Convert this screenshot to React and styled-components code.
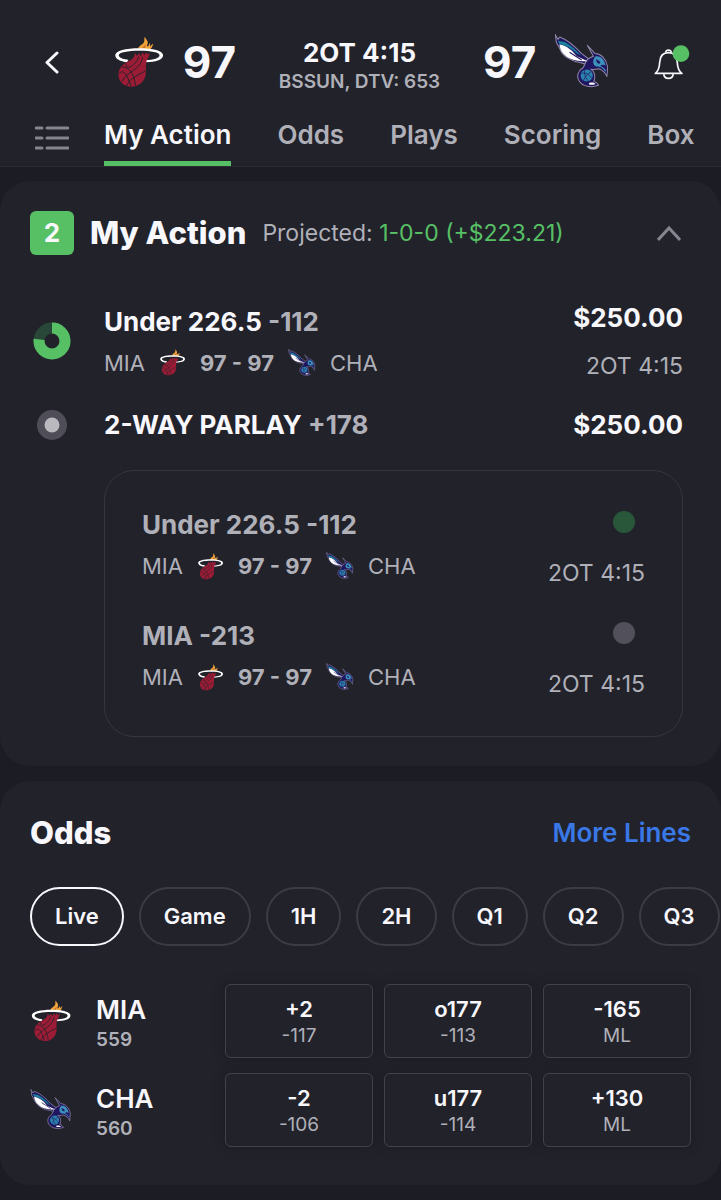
import React, { useState } from "react";
import styled, { createGlobalStyle } from "styled-components";

const HEADER_TABS = ["My Action", "Odds", "Plays", "Scoring", "Box"];
const PERIODS = ["Live", "Game", "1H", "2H", "Q1", "Q2", "Q3"];

const LEGS = [
  { id: 1, title: "Under 226.5 -112", winning: true },
  { id: 2, title: "MIA -213", winning: false },
];

const TEAMS = [
  {
    name: "MIA",
    number: 559,
    lines: [
      { value: "+2", price: "-117" },
      { value: "o177", price: "-113" },
      { value: "-165", price: "ML" },
    ],
  },
  {
    name: "CHA",
    number: 560,
    lines: [
      { value: "-2", price: "-106" },
      { value: "u177", price: "-114" },
      { value: "+130", price: "ML" },
    ],
  },
];

function HeatLogo({ size }) {
  return (
    <svg width={size} height={size} viewBox="28 16 158 162" aria-hidden="true">
      <path
        fill="#f2a33a"
        d="M104 56 C106 46 116 44 122 36 C126 31 122 24 125 18 C129 27 136 31 134 39 C133 43 131 46 132 49 C138 47 139 42 140 38 C143 42 142 46 141 49 C145 46 147 42 151 39 C150 47 146 53 142 58 Z"
      />
      <path
        fill="#c8741f"
        d="M116 56 C118 49 125 48 127 42 C129 47 127 51 126 56 Z"
      />
      <path
        fill="#fff"
        fillRule="evenodd"
        d="M108 54 C150 54 182 61 182 76 C182 91 158 97 128 98 L128 91 C152 90 171 86 171 76 C171 67 145 62 108 62 C72 62 44 67 44 76 C44 83 55 88 74 90 L70 98 C48 95 33 88 33 76 C33 62 66 54 108 54 Z"
      />
      <path
        fill="#9c1c36"
        d="M94 68 L101 78 L107 68 L112 79 L119 66 L123 76 L130 66 L132 74 L141 70 C139 82 131 88 129 99 C126 113 131 126 127 141 C122 160 106 174 83 174 C59 174 43 158 43 137 C43 117 57 103 74 95 C86 89 94 82 94 68 Z"
      />
      <g fill="none" stroke="#22222b" strokeWidth="3">
        <path d="M44 134 C58 119 68 131 82 172" />
        <path d="M54 112 C75 112 93 134 96 170" />
        <path d="M66 101 C70 127 90 107 101 92 C104 89 105 84 106 80" />
        <path d="M53 158 C62 143 76 132 88 124 C104 113 116 102 118 82" />
        <path d="M68 172 C76 150 105 136 127 125" />
      </g>
    </svg>
  );
}

function HornetsLogo({ size }) {
  return (
    <svg width={size} height={size} viewBox="26 24 166 166" aria-hidden="true">
      <g stroke="#9088a3" strokeWidth="3" strokeLinejoin="round">
        <path
          fill="#201560"
          d="M30 26 L38 40 L43 33 C72 44 91 64 108 82 L137 104 C132 113 119 115 106 109 C82 106 51 92 43 67 L33 49 Z"
        />
        <path
          fill="#201560"
          d="M125 58 L148 82 C166 83 181 98 185 121 L183 150 C178 139 171 131 159 127 C149 127 142 132 135 128 C147 134 150 151 144 164 C149 165 155 170 158 176 C135 184 112 180 101 164 C91 150 98 132 112 124 L117 115 C119 102 131 94 143 90 Z"
        />
      </g>
      <path fill="#1b819d" d="M37 44 L58 48 C78 58 93 75 106 88 L94 82 C76 66 60 57 42 54 Z" />
      <path
        fill="#fff"
        d="M42 55 C65 58 82 75 94 90 L126 105 C104 105 86 103 70 95 C53 85 44 72 42 55 Z"
      />
      <path stroke="#201560" strokeWidth="3" d="M72 78 L108 101" />
      <path
        fill="#3c91ba"
        d="M148 91 C163 87 175 98 179 119 C169 109 162 124 151 120 C142 118 138 106 148 91 Z"
      />
      <path fill="#201560" d="M151 99 C158 101 164 106 163 111 C157 114 151 110 151 99 Z" />
      <circle cx="123" cy="147" r="18" fill="#2b83ad" />
      <g fill="none" stroke="#201560" strokeWidth="2">
        <path d="M108 141 C120 136 132 145 138 157 M117 131 C114 145 122 156 128 164 M136 136 C124 142 117 153 114 161" />
        <path d="M158 119 C169 121 175 128 179 134" stroke="#4ba3c8" strokeWidth="3" />
      </g>
      <path fill="#fff" d="M130 169 C138 167 144 168 149 172 C142 175 136 175 130 174 Z" />
    </svg>
  );
}

function TeamLogo({ team, size }) {
  return team === "MIA" ? <HeatLogo size={size} /> : <HornetsLogo size={size} />;
}

function BellIcon() {
  return (
    <svg width="37" height="38" viewBox="520 64 110 112" aria-hidden="true">
      <g fill="none" stroke="#f7f7fc" strokeWidth="5" strokeLinejoin="round">
        <path d="M527 154 C535 148 539 138 540 120 C541 101 551 92 566 92 C581 92 591 101 592 120 C593 138 597 148 606 154 Z" />
        <path d="M558 92 C557 82 575 82 574 92" />
        <path d="M552 156 C553 173 579 173 580 156" />
      </g>
      <circle cx="603" cy="95" r="25" fill="#57c065" />
    </svg>
  );
}

function Matchup() {
  return (
    <MatchupRow>
      <span>MIA</span>
      <HeatLogo size={27} />
      <strong>97 - 97</strong>
      <HornetsLogo size={28} />
      <span>CHA</span>
    </MatchupRow>
  );
}

function GameHeader() {
  const [tab, setTab] = useState("My Action");

  return (
    <Header>
      <Scoreboard>
        <IconButton aria-label="Back">
          <svg width="14" height="23" viewBox="0 0 14 23" aria-hidden="true">
            <path
              d="M12 2 L2 11.500 L12 21"
              fill="none"
              stroke="#f7f7fc"
              strokeWidth="3"
              strokeLinecap="round"
              strokeLinejoin="round"
            />
          </svg>
        </IconButton>
        <TeamScore>
          <HeatLogo size={52} />
          <span>97</span>
        </TeamScore>
        <Clock>
          <h1>2OT 4:15</h1>
          <p>BSSUN, DTV: 653</p>
        </Clock>
        <TeamScore>
          <span>97</span>
          <HornetsLogo size={56} />
        </TeamScore>
        <IconButton aria-label="Alerts">
          <BellIcon />
        </IconButton>
      </Scoreboard>
      <TabBar>
        <MenuButton aria-label="All games">
          <svg width="34" height="26" viewBox="0 0 34 26" aria-hidden="true">
            <path
              d="M1 3 H7 M12 3 H33 M1 13 H7 M12 13 H33 M1 23 H7 M12 23 H33"
              stroke="#85858f"
              strokeWidth="3"
              strokeLinecap="round"
            />
          </svg>
        </MenuButton>
        {HEADER_TABS.map((name) => (
          <Tab key={name} $active={name === tab} onClick={() => setTab(name)}>
            {name}
          </Tab>
        ))}
      </TabBar>
    </Header>
  );
}

function MyAction() {
  return (
    <Card>
      <CardHeader>
        <Badge>2</Badge>
        <CardTitle>My Action</CardTitle>
        <Projected>
          Projected: <span>1-0-0 (+$223.21)</span>
        </Projected>
        <IconButton aria-label="Collapse">
          <svg width="24" height="16" viewBox="0 0 24 16" aria-hidden="true">
            <path
              d="M1 15 L12 3 L23 15"
              fill="none"
              stroke="#85858f"
              strokeWidth="3"
            />
          </svg>
        </IconButton>
      </CardHeader>
      <BetList>
        <Bet>
          <svg width="38" height="38" viewBox="0 0 38 38" aria-hidden="true">
            <g fill="none" strokeWidth="11" transform="rotate(-90 19 19)">
              <circle cx="19" cy="19" r="13" stroke="#284738" />
              <circle
                cx="19"
                cy="19"
                r="13"
                stroke="#57c065"
                pathLength="100"
                strokeDasharray="77 23"
              />
            </g>
          </svg>
          <BetInfo>
            <BetTitle>
              Under 226.5 <span>-112</span>
            </BetTitle>
            <Matchup />
          </BetInfo>
          <BetSide>
            <Amount>$250.00</Amount>
            <Time>2OT 4:15</Time>
          </BetSide>
        </Bet>
        <Bet>
          <svg width="30" height="30" viewBox="0 0 30 30" aria-hidden="true">
            <circle cx="15" cy="15" r="15" fill="#4f4e58" />
            <circle cx="15" cy="15" r="7.500" fill="#b9b9bf" />
          </svg>
          <BetTitle>
            2-WAY PARLAY <span>+178</span>
          </BetTitle>
          <Amount>$250.00</Amount>
        </Bet>
        <ParlayLegs>
          {LEGS.map((leg) => (
            <Leg key={leg.id}>
              <BetInfo>
                <BetTitle $muted>{leg.title}</BetTitle>
                <Matchup />
              </BetInfo>
              <LegSide>
                <StatusDot $winning={leg.winning} />
                <Time>2OT 4:15</Time>
              </LegSide>
            </Leg>
          ))}
        </ParlayLegs>
      </BetList>
    </Card>
  );
}

function Odds() {
  const [period, setPeriod] = useState("Live");

  return (
    <Card>
      <CardHeader>
        <CardTitle>Odds</CardTitle>
        <MoreLink href="#lines">More Lines</MoreLink>
      </CardHeader>
      <Pills>
        {PERIODS.map((name) => (
          <Pill
            key={name}
            $active={name === period}
            onClick={() => setPeriod(name)}
          >
            {name}
          </Pill>
        ))}
      </Pills>
      <OddsGrid>
        {TEAMS.map((team) => (
          <React.Fragment key={team.name}>
            <Team>
              <TeamLogo team={team.name} size={42} />
              <div>
                <h3>{team.name}</h3>
                <p>{team.number}</p>
              </div>
            </Team>
            {team.lines.map((line) => (
              <LineButton key={line.value}>
                <strong>{line.value}</strong>
                <span>{line.price}</span>
              </LineButton>
            ))}
          </React.Fragment>
        ))}
      </OddsGrid>
    </Card>
  );
}

export default function App() {
  return (
    <>
      <GlobalStyle />
      <GameHeader />
      <Main>
        <MyAction />
        <Odds />
      </Main>
    </>
  );
}

const GlobalStyle = createGlobalStyle`
  * {
    box-sizing: border-box;
  }
  body {
    margin: 0;
    background: #1c1c25;
    color: #f7f7fc;
    font-family: Inter, "Liberation Sans", sans-serif;
    font-size: 22px;
    line-height: 28px;
  }
  h1, h2, h3, p {
    margin: 0;
  }
  button {
    padding: 0;
    border: 0;
    background: none;
    color: inherit;
    font: inherit;
    cursor: pointer;
  }
  svg {
    display: block;
    flex-shrink: 0;
  }
`;

const Header = styled.header`
  padding-top: 32px;
  background: #22222b;
  border-bottom: 1px solid #2b2b35;
`;

const Scoreboard = styled.div`
  display: flex;
  align-items: center;
  justify-content: space-between;
  height: 60px;
  padding: 0 31px 0 34px;
`;

const IconButton = styled.button`
  display: flex;
  align-items: center;
  justify-content: center;
  min-width: 36px;
  height: 44px;
`;

const TeamScore = styled.div`
  display: flex;
  align-items: center;
  gap: 18px;
  font-size: 44px;
  font-weight: 700;
`;

const Clock = styled.div`
  padding-top: 8px;
  text-align: center;

  h1 {
    font-size: 26px;
    font-weight: 700;
    line-height: 32px;
  }
  p {
    color: #b0b0b8;
    font-size: 19px;
    font-weight: 600;
    line-height: 26px;
  }
`;

const TabBar = styled.nav`
  display: flex;
  gap: 46px;
  margin-top: 16px;
  padding-left: 35px;
  overflow: hidden;
`;

const MenuButton = styled.button`
  display: flex;
  align-items: center;
  margin-right: -11px;
  padding-top: 2px;
`;

const Tab = styled.button`
  height: 58px;
  padding-top: 1px;
  border-bottom: 5px solid ${(props) => (props.$active ? "#57c065" : "transparent")};
  color: ${(props) => (props.$active ? "#f7f7fc" : "#b0b0b8")};
  font-size: 26px;
  font-weight: 600;
  white-space: nowrap;
`;

const Main = styled.main`
  display: flex;
  flex-direction: column;
  gap: 15px;
  padding: 14px 0;
`;

const Card = styled.section`
  padding: 30px 30px 38px;
  border-radius: 30px;
  background: #22222b;

  &:first-child {
    padding-bottom: 29px;
  }
`;

const CardHeader = styled.div`
  display: flex;
  align-items: center;
  gap: 16px;
  height: 44px;

  button {
    margin: 0 4px 0 auto;
  }
`;

const Badge = styled.span`
  width: 44px;
  border-radius: 6px;
  background: #57c065;
  font-size: 26px;
  font-weight: 700;
  line-height: 44px;
  text-align: center;
`;

const CardTitle = styled.h2`
  font-size: 31px;
  font-weight: 800;
`;

const Projected = styled.p`
  color: #b0b0b8;
  font-size: 23px;

  span {
    color: #57c065;
  }
`;

const MoreLink = styled.a`
  margin-left: auto;
  color: #3978e6;
  font-size: 26px;
  font-weight: 600;
  text-decoration: none;
`;

const BetList = styled.div`
  display: flex;
  flex-direction: column;
  gap: 29px;
  margin-top: 47px;
  padding-right: 8px;
`;

const Bet = styled.div`
  display: grid;
  grid-template-columns: 44px 1fr auto;
  column-gap: 30px;
  align-items: center;

  > svg {
    justify-self: center;
  }
`;

const BetInfo = styled.div`
  display: flex;
  flex-direction: column;
  gap: 11px;
`;

const BetTitle = styled.h3`
  color: ${(props) => (props.$muted ? "#b0b0b8" : "#f7f7fc")};
  font-size: 26px;
  font-weight: 700;
  line-height: 32px;

  span {
    color: #b0b0b8;
  }
`;

const MatchupRow = styled.div`
  display: flex;
  align-items: center;
  gap: 14px;
  color: #b0b0b8;

  strong {
    font-weight: 700;
  }
`;

const BetSide = styled.div`
  display: flex;
  flex-direction: column;
  align-items: flex-end;
  gap: 18px;
`;

const Amount = styled.span`
  font-size: 26px;
  font-weight: 700;
  line-height: 32px;
`;

const Time = styled.span`
  color: #b0b0b8;
  font-size: 23px;
`;

const ParlayLegs = styled.div`
  display: flex;
  flex-direction: column;
  gap: 33px;
  margin-left: 74px;
  padding: 38px 37px;
  border: 1px solid #363640;
  border-radius: 30px;
`;

const Leg = styled.div`
  display: flex;
  justify-content: space-between;
`;

const LegSide = styled.div`
  display: flex;
  flex-direction: column;
  align-items: flex-end;
  gap: 26px;
  padding-top: 2px;
`;

const StatusDot = styled.span`
  width: 22px;
  height: 22px;
  margin-right: 10px;
  border-radius: 50%;
  background: ${(props) => (props.$winning ? "#29573a" : "#52515b")};
`;

const Pills = styled.div`
  display: flex;
  gap: 15px;
  margin: 32px -30px 0 0;
  overflow-x: auto;
  scrollbar-width: none;
`;

const Pill = styled.button`
  flex-shrink: 0;
  height: 59px;
  padding: 0 23px 2px;
  border: 2px solid ${(props) => (props.$active ? "#f7f7fc" : "#3c3c46")};
  border-radius: 30px;
  font-weight: 600;
`;

const OddsGrid = styled.div`
  display: grid;
  grid-template-columns: 184fr repeat(3, 148fr);
  gap: 15px 11px;
  margin-top: 38px;
`;

const Team = styled.div`
  display: flex;
  align-items: center;
  gap: 24px;

  div {
    padding-top: 6px;
  }
  h3 {
    font-size: 26px;
    font-weight: 600;
    line-height: 32px;
  }
  p {
    color: #b0b0b8;
    font-size: 19px;
    font-weight: 600;
  }
`;

const LineButton = styled.button`
  display: flex;
  flex-direction: column;
  align-items: center;
  justify-content: center;
  height: 74px;
  padding-top: 2px;
  border: 1px solid #42424c;
  border-radius: 6px;
  box-shadow: 0 0 12px rgba(20, 20, 28, 0.4);

  strong {
    font-weight: 600;
  }
  span {
    color: #b0b0b8;
    font-size: 19px;
    line-height: 26px;
  }
`;
